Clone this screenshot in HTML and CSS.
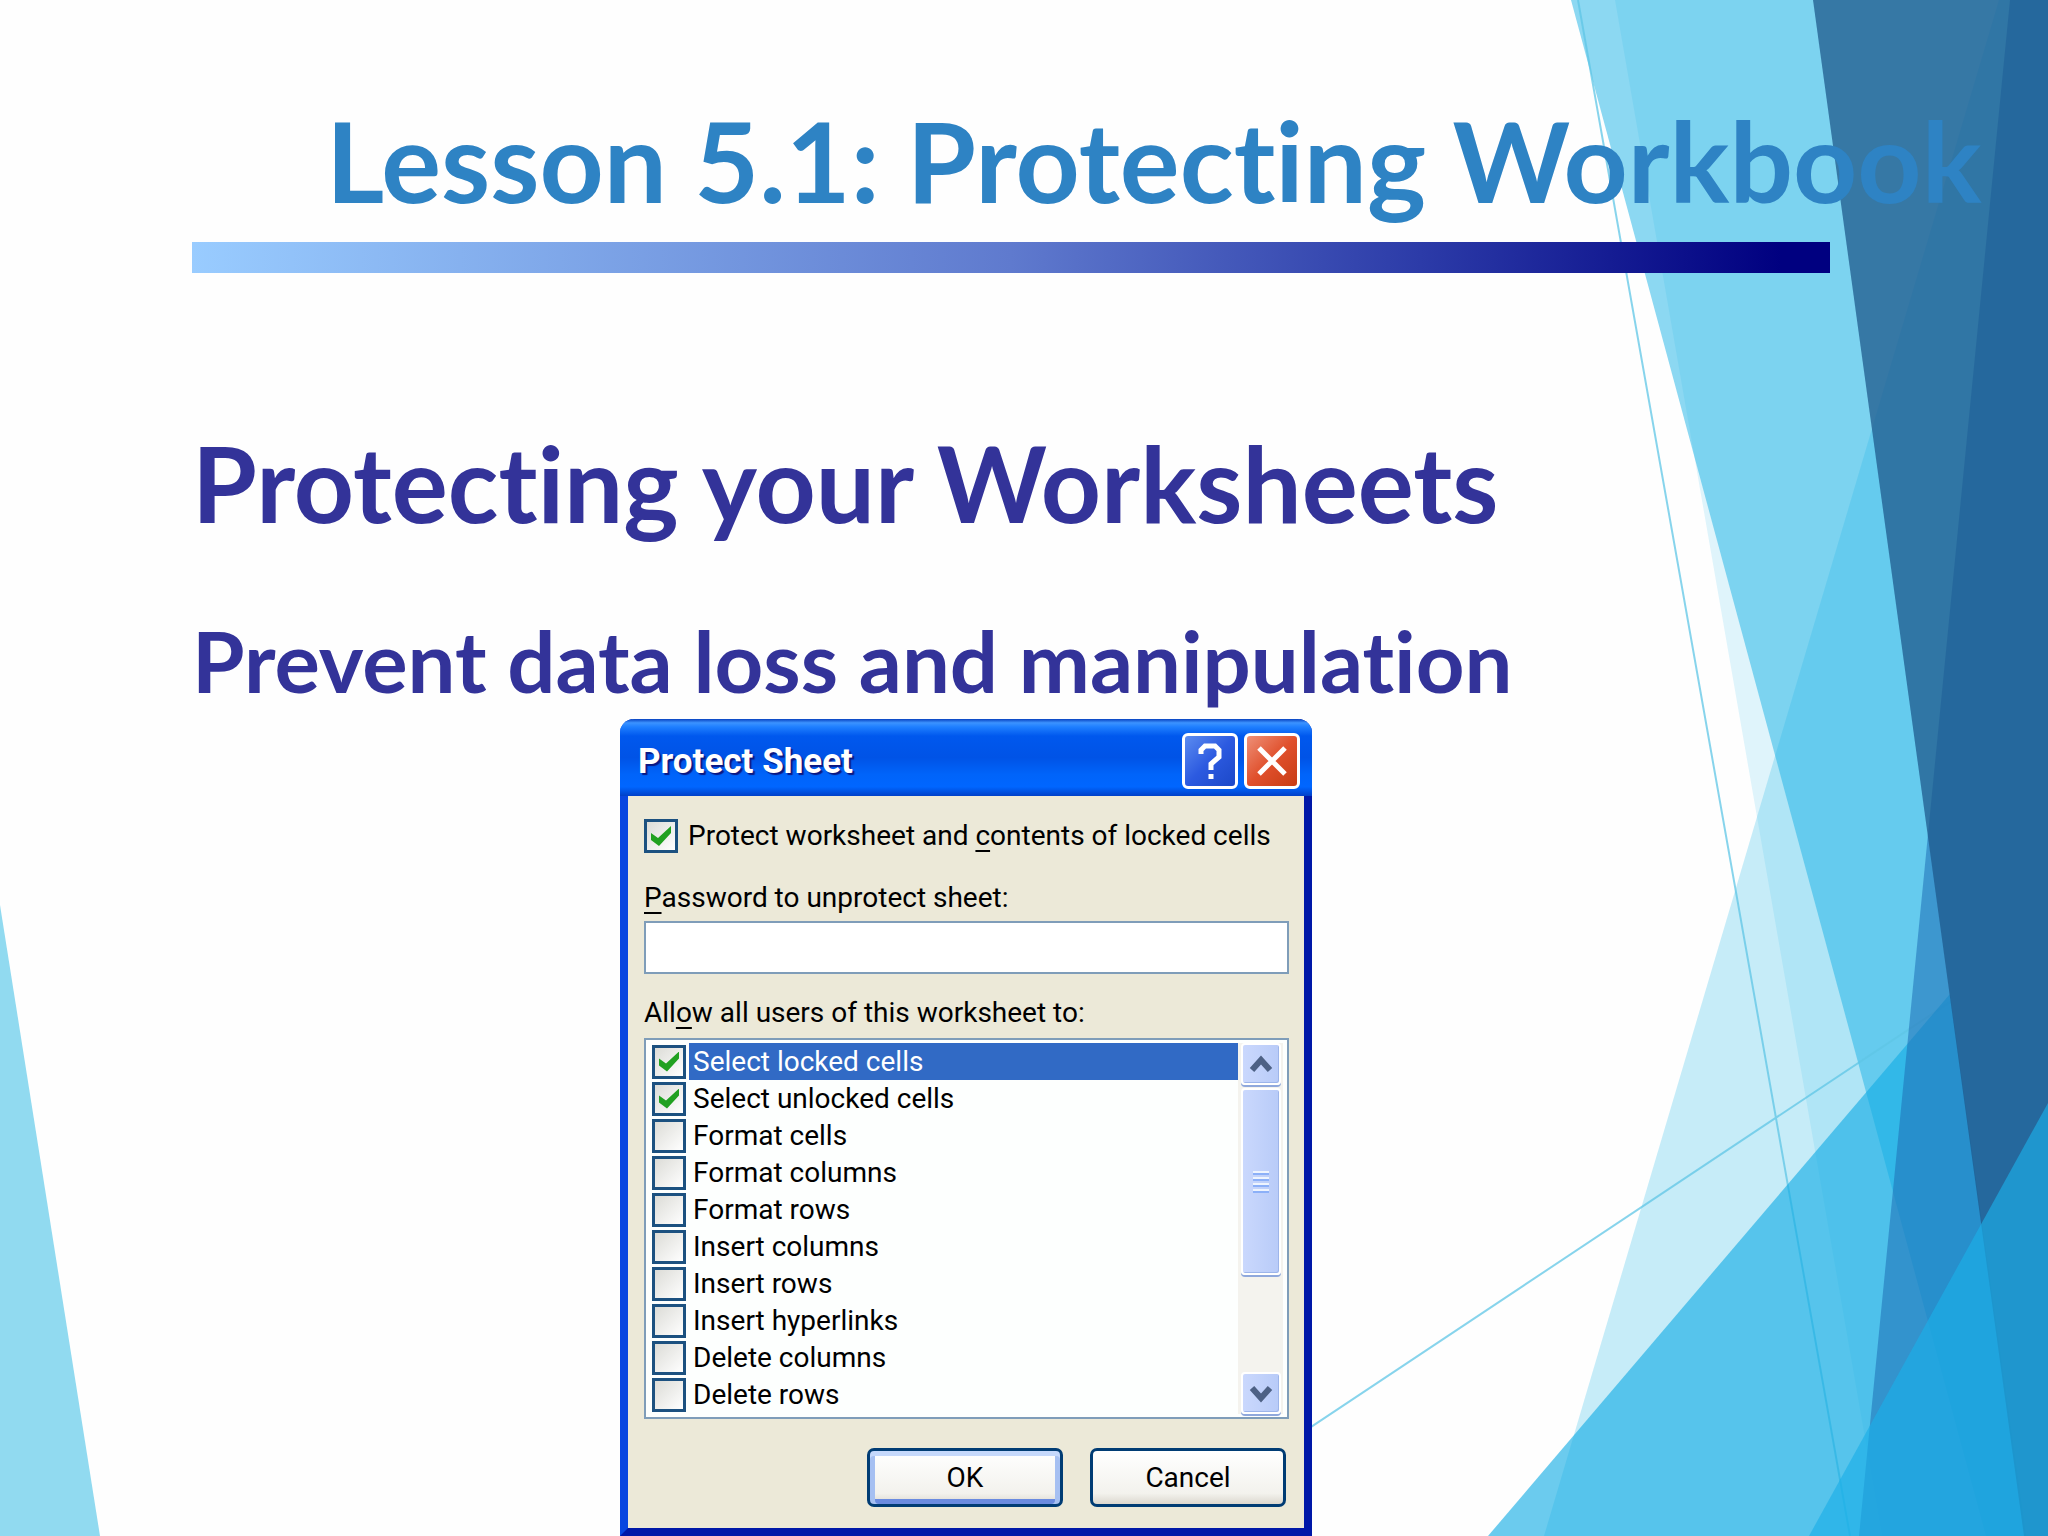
FILE: index.html
```
<!DOCTYPE html>
<html lang="en">

<head>
  <meta charset="UTF-8" />
  <meta name="viewport" content="width=device-width, initial-scale=1.0" />
  <title>Lesson 5.1: Protecting Workbook</title>
  <link rel="stylesheet" href="styles.css">
</head>

<body>
  <main class="slide">
    <!-- background facets -->
    <svg class="facets" viewBox="0 0 2048 1536" preserveAspectRatio="none" aria-hidden="true">
      <polygon points="0,905 100,1536 0,1536" fill="#91daf0" />
      <polygon points="1615,0 2048,0 2048,1536 1882,1536" fill="#dff4fb" />
      <polygon points="1999,0 2048,0 2048,1536 1544,1536" fill="rgba(55,191,234,.28)" />
      <polygon points="1571,0 2048,0 2048,1536 1986,1536" fill="rgba(30,179,230,.51)" />
      <path d="M1578 0L1850 1536M1147 1536L1950 1002" stroke="#5fc5e6" stroke-opacity=".75" stroke-width="2" fill="none" />
      <polygon points="1488,1536 1950,994 2026,1536" fill="rgba(20,172,228,.63)" />
      <polygon points="2010,0 2048,0 2048,1536 1859,1536" fill="rgba(30,111,182,.56)" />
      <polygon points="1813,0 2048,0 2048,1536 2024,1536" fill="rgba(30,88,139,.74)" />
      <polygon points="1809,1536 2048,1103 2048,1536" fill="rgba(27,175,232,.65)" />
    </svg>

    <h1 class="slide-title">Lesson 5.1: Protecting Workbook</h1>
    <div class="slide-bar"></div>
    <h2 class="slide-heading">Protecting your Worksheets</h2>
    <p class="slide-text">Prevent data loss and manipulation</p>

    <form class="dialog">
      <div class="dialog-header">
        <h3>Protect Sheet</h3>
        <button type="button" class="help" aria-label="Help">
          <svg viewBox="0 0 50 50">
            <path d="M16 18v-4l4-4h10l4 4v7l-8 7v6M26 38v5" />
          </svg>
        </button>
        <button type="button" class="close" aria-label="Close">
          <svg viewBox="0 0 50 50">
            <path d="M12 12L38 38M38 12L12 38" />
          </svg>
        </button>
      </div>
      <div class="dialog-body">
        <label class="protect"><input type="checkbox" checked><span>Protect worksheet and <u>c</u>ontents of locked cells</span></label>
        <label class="caption" for="password"><u>P</u>assword to unprotect sheet:</label>
        <input class="password" id="password" type="password">
        <p class="caption">All<u>o</u>w all users of this worksheet to:</p>
        <div class="list">
          <ul class="options">
            <li class="active"><label><input type="checkbox" checked><span>Select locked cells</span></label></li>
            <li><label><input type="checkbox" checked><span>Select unlocked cells</span></label></li>
            <li><label><input type="checkbox"><span>Format cells</span></label></li>
            <li><label><input type="checkbox"><span>Format columns</span></label></li>
            <li><label><input type="checkbox"><span>Format rows</span></label></li>
            <li><label><input type="checkbox"><span>Insert columns</span></label></li>
            <li><label><input type="checkbox"><span>Insert rows</span></label></li>
            <li><label><input type="checkbox"><span>Insert hyperlinks</span></label></li>
            <li><label><input type="checkbox"><span>Delete columns</span></label></li>
            <li><label><input type="checkbox"><span>Delete rows</span></label></li>
          </ul>
          <div class="scrollbar">
            <button type="button" aria-label="Scroll up">
              <svg viewBox="0 0 36 36">
                <path d="M9 24L18 14L27 24" />
              </svg>
            </button>
            <div class="thumb"><i></i><i></i><i></i><i></i></div>
            <button type="button" class="down" aria-label="Scroll down">
              <svg viewBox="0 0 36 36">
                <path d="M9 13L18 23L27 13" />
              </svg>
            </button>
          </div>
        </div>
        <div class="dialog-footer">
          <button type="button" class="ok">OK</button>
          <button type="button">Cancel</button>
        </div>
      </div>
    </form>
  </main>
</body>

</html>
```

FILE: styles.css
```
* {
  box-sizing: border-box;
}

body {
  margin: 0;
  background: #fefefe;
  font-family: Lato, "Open Sans", sans-serif;
}

h1,
h2,
h3,
p,
ul {
  margin: 0;
  padding: 0;
}

.slide {
  position: relative;
  min-height: 100vh;
  padding: 95px 218px 0 192px;
  overflow: hidden;
}

/* everything after the facets is drawn above them */
.slide > * {
  position: relative;
}

.slide > .facets {
  position: absolute;
  top: 0;
  left: 0;
  width: 100%;
  height: 100%;
}

.slide-title,
.slide-heading,
.slide-text {
  font-weight: bold;
  font-variant-ligatures: none;
  white-space: nowrap;
  color: #333399;
}

.slide-title {
  padding-left: 134px;
  font-size: 112px;
  line-height: 130px;
  color: #2e83c4;
}

.slide-bar {
  height: 31px;
  margin-top: 17px;
  background: linear-gradient(90deg, #99ccff, #5f7ace 50%, #2c3ba8 75%, #000080 97%);
}

.slide-heading {
  margin-top: 149px;
  font-size: 105px;
  line-height: 120px;
}

.slide-text {
  margin-top: 70px;
  font-size: 85px;
  line-height: 96px;
}

.dialog {
  width: 692px;
  margin-top: 11px;
  margin-left: 428px;
  border: 8px solid #0033dd;
  border-color: #0033dd #0018a8 #0018a8 #0846e0;
  border-top: none;
  border-radius: 14px 14px 0 0;
  background: #ece9d8;
  color: #000;
  font-family: Roboto, "Noto Sans", sans-serif;
  font-size: 28px;
  line-height: 34px;
}

.dialog-header {
  display: flex;
  align-items: center;
  gap: 6px;
  height: 77px;
  margin: 0 -8px;
  padding: 6px 12px 0 18px;
  border-radius: 14px 14px 0 0;
  background: linear-gradient(#0842c0, #3c93ff 5%, #2080ff 10%, #0058ee 22%, #0053e6 50%, #0064fa 72%, #0066ff 88%, #0040c8);
}

.dialog-header h3 {
  flex: 1;
  color: #fff;
  font-size: 35px;
  line-height: 40px;
  padding-top: 3px;
  text-shadow: 2px 2px 1px #0a1883;
}

.dialog-header button {
  width: 56px;
  height: 56px;
  padding: 0;
  border: 3px solid #fff;
  border-radius: 6px;
  background: linear-gradient(135deg, #5c8cf0, #2c5ae0 50%, #1c48c8);
}

.dialog-header .close {
  background: linear-gradient(135deg, #ee9078, #e0502c 50%, #c83c14);
}

.dialog-header svg {
  display: block;
  width: 50px;
  height: 50px;
  fill: none;
  stroke: #fff;
  stroke-width: 5;
}

.dialog-body {
  padding: 21px 15px 21px 16px;
}

.dialog label {
  display: flex;
  align-items: center;
}

.dialog input[type="checkbox"] {
  appearance: none;
  width: 34px;
  height: 34px;
  margin: 0;
  border: 3px solid #1c5180;
  background: linear-gradient(135deg, #dcdcd7, #fff);
}

.dialog input[type="checkbox"]:checked::before {
  content: "";
  display: block;
  width: 20px;
  height: 20px;
  margin: 4px;
  background: #21a121;
  clip-path: polygon(0 35%, 35% 60%, 100% 0, 100% 35%, 40% 100%, 0 70%);
}

.dialog u {
  text-decoration-thickness: 2px;
  text-underline-offset: 5px;
}

.dialog .protect {
  gap: 10px;
  line-height: 38px;
}

.dialog .caption {
  display: block;
  margin-top: 26px;
}

.password {
  display: block;
  width: 100%;
  height: 53px;
  margin: 6px 0 -4px;
  border: 2px solid #7f9db9;
  background: #fff;
}

.list {
  display: flex;
  height: 381px;
  margin-top: 8px;
  padding: 3px 4px 3px 6px;
  border: 2px solid #7f9db9;
  background: #fdfffe;
}

.options {
  flex: 1;
  list-style: none;
}

.options label {
  gap: 3px;
}

.options span {
  flex: 1;
  height: 37px;
  padding-left: 4px;
  line-height: 37px;
}

.options .active span {
  background: #316ac5;
  color: #fff;
}

.scrollbar {
  display: flex;
  flex-direction: column;
  width: 45px;
  padding: 0 2px 0 3px;
  background: #f4f3ee;
}

.scrollbar button,
.thumb {
  border: 2px solid #fff;
  border-radius: 4px;
  background: linear-gradient(90deg, #cad8fd, #b8cbf8);
  box-shadow: inset -1px -1px 0 #9db5ea, 0 2px 0 #8fa8dc;
}

.scrollbar button {
  height: 42px;
  padding: 0;
}

.scrollbar svg {
  display: block;
  width: 36px;
  height: 36px;
  fill: none;
  stroke: #4d6185;
  stroke-width: 6;
}

.scrollbar .down {
  margin-top: auto;
}

.thumb {
  display: flex;
  flex-direction: column;
  align-items: center;
  justify-content: center;
  gap: 2px;
  height: 187px;
  margin-top: 3px;
}

.thumb i {
  width: 16px;
  height: 4px;
  border-top: 2px solid #eef4fe;
  border-bottom: 2px solid #8cb0f8;
}

.dialog-footer {
  display: flex;
  justify-content: flex-end;
  gap: 27px;
  margin-top: 29px;
  padding-right: 3px;
}

.dialog-footer button {
  width: 196px;
  height: 59px;
  border: 3px solid #003c74;
  border-radius: 7px;
  background: linear-gradient(#fff, #f3f2ed 80%, #dcd8cf);
  color: #000;
  font: inherit;
}

.dialog-footer .ok {
  box-shadow: inset 0 5px 0 #c5d8fb, inset 5px 0 0 #a6c0f2, inset -5px 0 0 #a6c0f2, inset 0 -5px 0 #6a8be0;
}
```
